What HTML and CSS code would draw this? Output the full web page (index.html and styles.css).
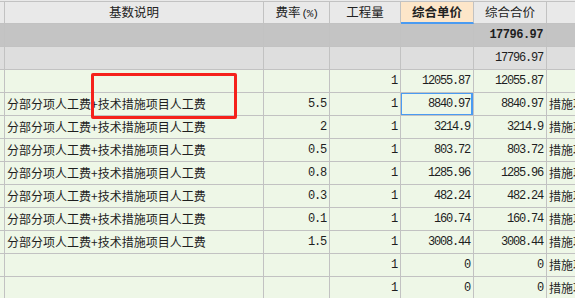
FILE: index.html
```html
<!DOCTYPE html>
<html lang="zh">
<head>
<meta charset="utf-8">
<link rel="stylesheet" href="styles.css">
</head>
<body>
<div class="sheet">
  <div class="topgap"></div>
  <div class="row head">
    <div class="c"></div>
    <div class="c ctr">基数说明</div>
    <div class="c ctr">费率<span class="pct">(%)</span></div>
    <div class="c ctr">工程量</div>
    <div class="c ctr active">综合单价</div>
    <div class="c ctr">综合合价</div>
    <div class="c"></div>
  </div>
  <div class="row sum1">
    <div class="c"></div><div class="c"></div><div class="c"></div><div class="c"></div><div class="c"></div>
    <div class="c num bold">17796.97</div><div class="c"></div>
  </div>
  <div class="row sum2">
    <div class="c"></div><div class="c"></div><div class="c"></div><div class="c"></div><div class="c"></div>
    <div class="c num">17796.97</div><div class="c"></div>
  </div>
  <div class="row">
    <div class="c"></div><div class="c"></div><div class="c"></div>
    <div class="c num">1</div><div class="c num">12055.87</div><div class="c num">12055.87</div><div class="c"></div>
  </div>
  <div class="row">
    <div class="c"></div><div class="c txt">分部分项人工费+技术措施项目人工费</div><div class="c num">5.5</div>
    <div class="c num">1</div><div class="c num selected">8840.97</div><div class="c num">8840.97</div><div class="c txt">措施项目</div>
  </div>
  <div class="row">
    <div class="c"></div><div class="c txt">分部分项人工费+技术措施项目人工费</div><div class="c num">2</div>
    <div class="c num">1</div><div class="c num">3214.9</div><div class="c num">3214.9</div><div class="c txt">措施项目</div>
  </div>
  <div class="row">
    <div class="c"></div><div class="c txt">分部分项人工费+技术措施项目人工费</div><div class="c num">0.5</div>
    <div class="c num">1</div><div class="c num">803.72</div><div class="c num">803.72</div><div class="c txt">措施项目</div>
  </div>
  <div class="row">
    <div class="c"></div><div class="c txt">分部分项人工费+技术措施项目人工费</div><div class="c num">0.8</div>
    <div class="c num">1</div><div class="c num">1285.96</div><div class="c num">1285.96</div><div class="c txt">措施项目</div>
  </div>
  <div class="row">
    <div class="c"></div><div class="c txt">分部分项人工费+技术措施项目人工费</div><div class="c num">0.3</div>
    <div class="c num">1</div><div class="c num">482.24</div><div class="c num">482.24</div><div class="c txt">措施项目</div>
  </div>
  <div class="row">
    <div class="c"></div><div class="c txt">分部分项人工费+技术措施项目人工费</div><div class="c num">0.1</div>
    <div class="c num">1</div><div class="c num">160.74</div><div class="c num">160.74</div><div class="c txt">措施项目</div>
  </div>
  <div class="row">
    <div class="c"></div><div class="c txt">分部分项人工费+技术措施项目人工费</div><div class="c num">1.5</div>
    <div class="c num">1</div><div class="c num">3008.44</div><div class="c num">3008.44</div><div class="c txt">措施项目</div>
  </div>
  <div class="row">
    <div class="c"></div><div class="c"></div><div class="c"></div>
    <div class="c num">1</div><div class="c num">0</div><div class="c num">0</div><div class="c txt">措施项目</div>
  </div>
  <div class="row">
    <div class="c"></div><div class="c"></div><div class="c"></div>
    <div class="c num">1</div><div class="c num">0</div><div class="c num">0</div><div class="c txt">措施项目</div>
  </div>
  <div class="mark"></div>
</div>
</body>
</html>
```
FILE: styles.css
```css
html, body {
  margin: 0;
  padding: 0;
  background: #eef7e7;
}
body {
  width: 575px;
  height: 298px;
  overflow: hidden;
  font-family: "Noto Sans CJK SC", "Noto Sans", sans-serif;
  font-size: 12px;
  color: #1e1e1e;
}
.sheet {
  position: relative;
}
.topgap {
  height: 1px;
  background: #e9e9e9;
}
.row {
  display: grid;
  grid-template-columns: 5px 259px 66px 71px 73px 73px 28px;
  height: 23px;
  background: #eef7e7;
}
.c {
  box-sizing: border-box;
  height: 23px;
  border-right: 1px solid #c2c2c2;
  border-bottom: 1px solid #c2c2c2;
  line-height: 22px;
  white-space: nowrap;
  overflow: hidden;
  position: relative;
}
.c:last-child {
  border-right: none;
}
.head {
  background: #e9e9e9;
}
.head .c {
  height: 23px;
  border-top: 1px solid #c2c2c2;
  line-height: 20px;
  font-size: 12.5px;
  color: #222;
}
.ctr {
  text-align: center;
}
.pct {
  font-family: "Liberation Mono", monospace;
  font-size: 11px;
  letter-spacing: -1.2px;
  margin-left: 1px;
}
.head .active {
  background: #fde6c9;
  font-weight: bold;
  border-bottom: 2px solid #4a9bf2;
}
.sum1 {
  background: #c4c4c4;
}
.sum2 {
  background: #dedede;
}
.num {
  text-align: right;
  padding-right: 3px;
  font-family: "Liberation Mono", monospace;
  font-size: 12px;
  letter-spacing: -1.2px;
}
.bold {
  font-weight: bold;
  letter-spacing: -0.5px;
}
.txt {
  padding-left: 2px;
}
.selected::after {
  content: "";
  position: absolute;
  left: -1px;
  top: -1px;
  right: 0;
  bottom: -1px;
  border: 2px solid #4a9bf2;
}
.mark {
  position: absolute;
  left: 91px;
  top: 73px;
  width: 146px;
  height: 46px;
  box-sizing: border-box;
  border: 3px solid #f5211b;
  border-radius: 2px;
}
```
